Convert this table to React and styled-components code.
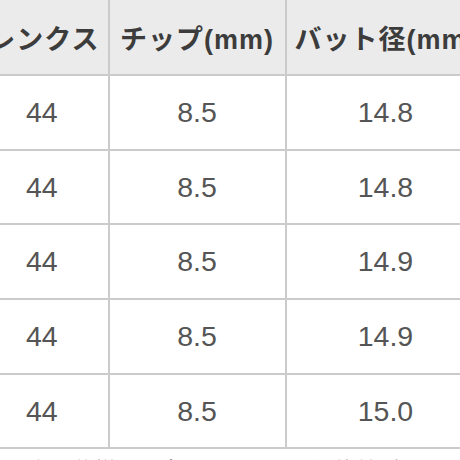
import React from "react";
import styled, { createGlobalStyle } from "styled-components";

const Global = createGlobalStyle`
  html, body { margin: 0; padding: 0; background: #fff; overflow: hidden; }
  body { width: 460px; height: 460px; font-family: "Liberation Sans", "Noto Sans CJK JP", sans-serif; }
`;

const Viewport = styled.div`
  width: 460px;
  height: 460px;
  overflow: hidden;
`;

const Table = styled.div`
  display: grid;
  grid-template-columns: 131.5px 175px 198px 160px;
  grid-template-rows: 74px repeat(5, 72.7px);
  gap: 2px;
  padding-bottom: 2px;
  background: #cbcbcb;
  margin-left: -24px;
  width: max-content;
`;

const HeadCell = styled.div`
  background: #ebebeb;
  color: #3c3c3c;
  font-weight: bold;
  font-size: 27px;
  letter-spacing: 1px;
  display: flex;
  align-items: center;
  justify-content: ${(p) => (p.$align === "right" ? "flex-end" : "center")};
  padding-right: ${(p) => (p.$align === "right" ? "8px" : "0")};
  white-space: nowrap;
  overflow: hidden;
`;

const Cell = styled.div`
  background: #fff;
  color: #555;
  font-size: 28.5px;
  display: flex;
  align-items: center;
  justify-content: center;
`;

const Note = styled.p`
  margin: 0;
  padding: 7px 0 0 0;
  font-size: 22px;
  line-height: 1.4;
  color: #8a8a8a;
  white-space: nowrap;
`;

const rows = [
  ["44", "8.5", "14.8", "9.5"],
  ["44", "8.5", "14.8", "9.5"],
  ["44", "8.5", "14.9", "9.5"],
  ["44", "8.5", "14.9", "9.5"],
  ["44", "8.5", "15.0", "9.5"],
];

export default function App() {
  return (
    <Viewport>
      <Global />
      <Table>
        <HeadCell $align="right">ルレンクス</HeadCell>
        <HeadCell>チップ(mm)</HeadCell>
        <HeadCell>バット径(mm)</HeadCell>
        <HeadCell>重量</HeadCell>
        {rows.map((r, i) => r.map((v, j) => <Cell key={i + "-" + j}>{v}</Cell>))}
      </Table>
      <Note>※ 上記仕様は目安となります。個体差があります。</Note>
    </Viewport>
  );
}
